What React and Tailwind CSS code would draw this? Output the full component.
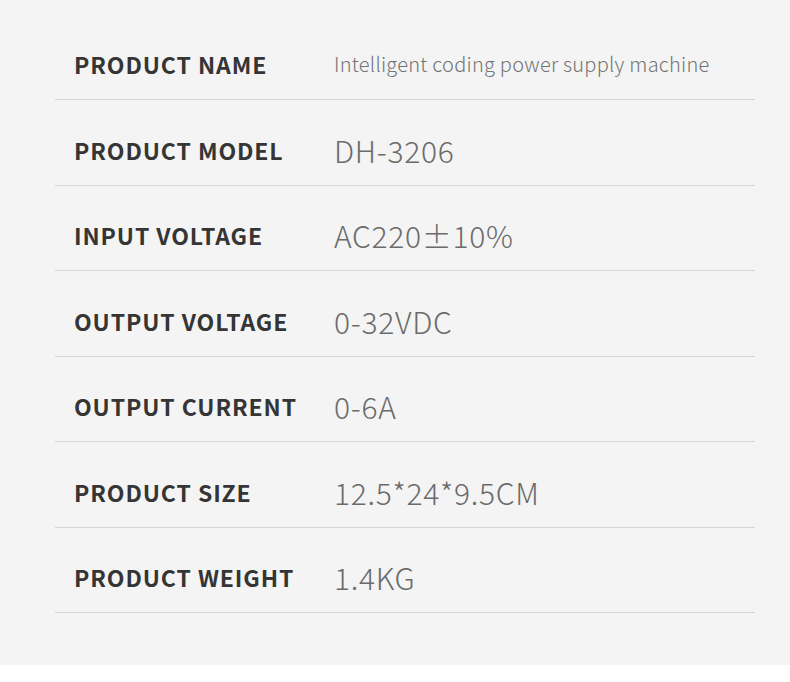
import React from "react";

const specs = [
  { label: "PRODUCT NAME", value: "Intelligent coding power supply machine", small: true },
  { label: "PRODUCT MODEL", value: "DH-3206" },
  { label: "INPUT VOLTAGE", value: "AC220±10%" },
  { label: "OUTPUT VOLTAGE", value: "0-32VDC" },
  { label: "OUTPUT CURRENT", value: "0-6A" },
  { label: "PRODUCT SIZE", value: "12.5*24*9.5CM" },
  { label: "PRODUCT WEIGHT", value: "1.4KG" },
];

const SpecRow = ({ label, value, small }) => (
  <div className="h-[85.5px] flex items-end pb-[20px] pl-[19px] border-b border-[#d6d6d6]">
    <span className="w-[260px] shrink-0 text-[23px] leading-[30px] font-bold text-[#353535] tracking-[0.9px]">
      {label}
    </span>
    <span
      className={
        small
          ? "text-[20px] leading-[30px] font-light text-[#737373] tracking-[0.25px]"
          : "text-[30px] leading-[30px] font-light text-[#6b6b6b] tracking-[0.7px]"
      }
    >
      {value}
    </span>
  </div>
);

export default function App() {
  return (
    <div
      className="w-[790px] h-[682px] bg-white"
      style={{ fontFamily: '"Noto Sans CJK SC", "Noto Sans", sans-serif' }}
    >
      <div className="h-[665px] bg-[#f4f4f4] pt-[14.5px]">
        <div className="ml-[55px] w-[700px]">
          {specs.map((s) => (
            <SpecRow key={s.label} {...s} />
          ))}
        </div>
      </div>
    </div>
  );
}
